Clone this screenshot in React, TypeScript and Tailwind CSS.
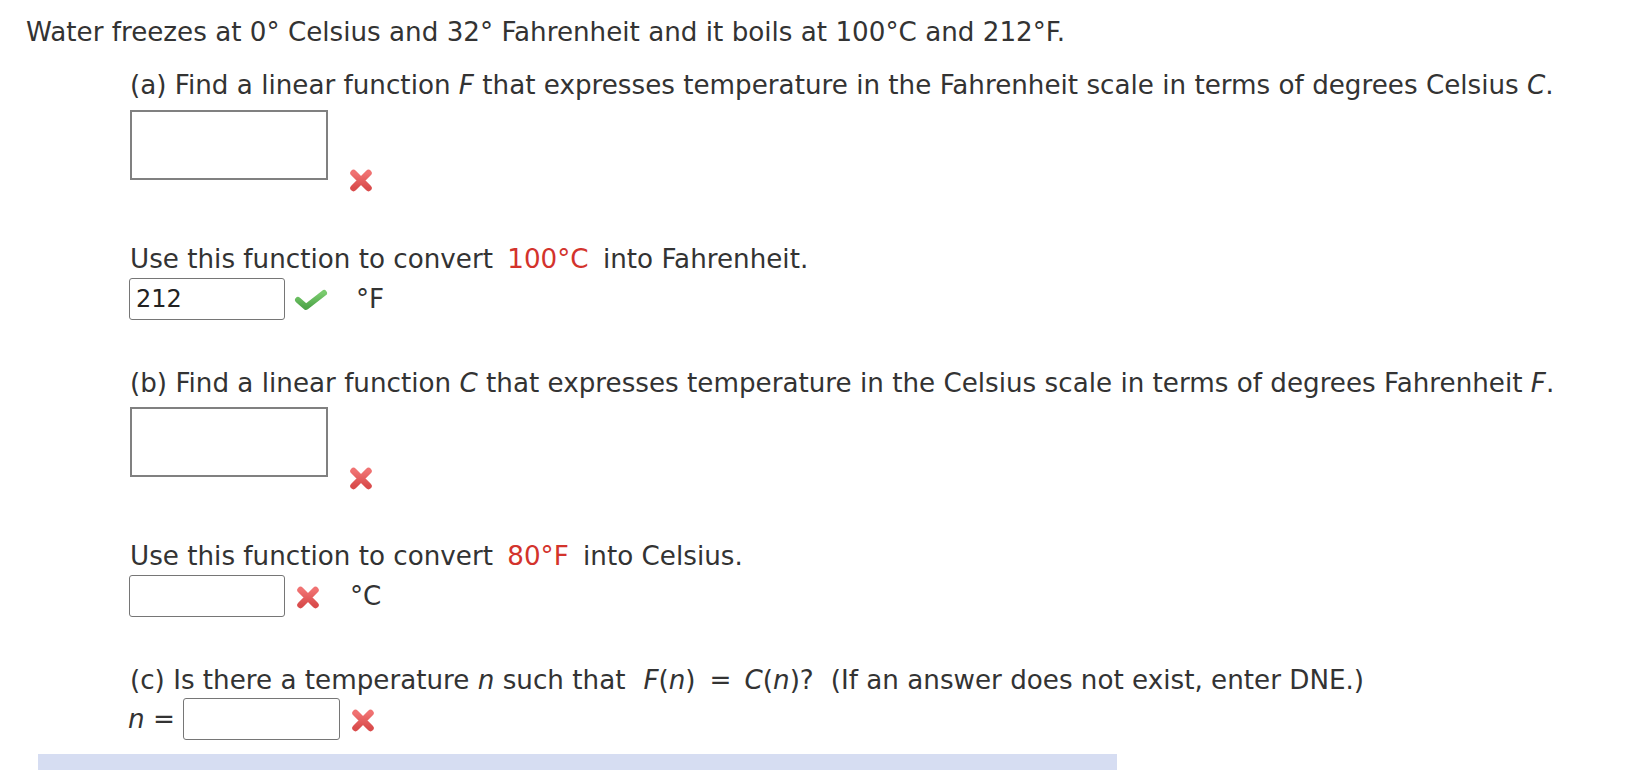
import React from "react";

const XMark = () => (
  <svg width="28" height="27" viewBox="0 0 28 27" className="block">
    <defs>
      <linearGradient id="xg" x1="0" y1="0" x2="0" y2="1">
        <stop offset="0" stopColor="#f07272" />
        <stop offset="1" stopColor="#d94c4c" />
      </linearGradient>
    </defs>
    <path d="M6.5 6 L21.5 21 M21.5 6 L6.5 21" stroke="url(#xg)" strokeWidth="6.5" strokeLinecap="round" fill="none" />
  </svg>
);

const Check = () => (
  <svg width="34" height="22" viewBox="0 0 34 22" className="block">
    <defs>
      <linearGradient id="cg" x1="0" y1="0" x2="0" y2="1">
        <stop offset="0" stopColor="#7acb6e" />
        <stop offset="1" stopColor="#4fa64a" />
      </linearGradient>
    </defs>
    <path d="M4 11 L12 18 L30 4" stroke="url(#cg)" strokeWidth="6" strokeLinecap="round" strokeLinejoin="round" fill="none" />
  </svg>
);

export default function App() {
  return (
    <div
      className="w-[1628px] h-[770px] bg-white text-[#333333] overflow-hidden"
      style={{ fontFamily: '"DejaVu Sans", Verdana, sans-serif' }}
    >
      <div className="text-[26.2px] leading-[36px]">
        <div className="pt-[14px] pl-[26px] h-[50px]">
          Water freezes at 0° Celsius and 32° Fahrenheit and it boils at 100°C and 212°F.
        </div>

        <div className="pl-[130px]">
          <div className="mt-[17px] h-[36px]">
            (a) Find a linear function <i>F</i> that expresses temperature in the Fahrenheit scale in terms of degrees Celsius <i>C</i>.
          </div>
          <div className="mt-[7px] flex items-end">
            <div className="w-[198px] h-[70px] border-2 border-[#808080] bg-white" />
            <div className="ml-[19px] mb-[-14px]">
              <XMark />
            </div>
          </div>

          <div className="mt-[61px] h-[36px]">
            Use this function to convert <span className="text-[#d3332c] mx-[6px]">100°C</span> into Fahrenheit.
          </div>
          <div className="mt-[1px] flex items-center h-[42px] -ml-[1px]">
            <div className="w-[156px] h-[42px] border border-[#767676] rounded-[3px] flex items-center pl-[6px] text-[24px] text-[#222]">
              212
            </div>
            <div className="ml-[9px] mt-[2px]">
              <Check />
            </div>
            <div className="ml-[28px]">°F</div>
          </div>

          <div className="mt-[45px] h-[36px]">
            (b) Find a linear function <i>C</i> that expresses temperature in the Celsius scale in terms of degrees Fahrenheit <i>F</i>.
          </div>
          <div className="mt-[6px] flex items-end">
            <div className="w-[198px] h-[70px] border-2 border-[#808080] bg-white" />
            <div className="ml-[19px] mb-[-15px]">
              <XMark />
            </div>
          </div>

          <div className="mt-[61px] h-[36px]">
            Use this function to convert <span className="text-[#d3332c] mx-[6px]">80°F</span> into Celsius.
          </div>
          <div className="mt-[1px] flex items-center h-[42px] -ml-[1px]">
            <div className="w-[156px] h-[42px] border border-[#767676] rounded-[3px]" />
            <div className="ml-[9px] mt-[3px]">
              <XMark />
            </div>
            <div className="ml-[28px]">°C</div>
          </div>

          <div className="mt-[45px] h-[36px] whitespace-nowrap">
            (c) Is there a temperature <i>n</i> such that<span className="ml-[18px]"><i>F</i>(<i>n</i>)</span><span className="ml-[14px] mr-[13px]">=</span><i>C</i>(<i>n</i>)?<span className="ml-[17px]">(If an answer does not exist, enter DNE.)</span>
          </div>
          <div className="flex items-center h-[42px] -ml-[2px]">
            <div className="w-[55px]"><i>n</i> =</div>
            <div className="w-[157px] h-[42px] border border-[#767676] rounded-[3px]" />
            <div className="ml-[9px] mt-[3px]">
              <XMark />
            </div>
          </div>
        </div>

        <div className="mt-[14px] ml-[38px] w-[1079px] h-[20px] bg-[#d6ddf2]" />
      </div>
    </div>
  );
}
